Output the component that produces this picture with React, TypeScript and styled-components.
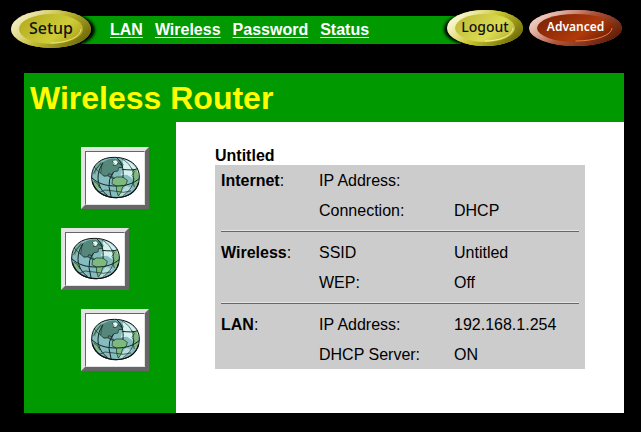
import React from "react";
import styled, { createGlobalStyle } from "styled-components";

const GlobalStyle = createGlobalStyle`
  * { box-sizing: border-box; }
  body {
    margin: 0;
    background: #000;
    color: #000;
    font: 16px/20px "Liberation Sans", Arial, sans-serif;
  }
`;

const TopBar = styled.header`
  display: flex;
  align-items: flex-start;
  padding: 10px 19px 0 11px;
  height: 73px;
`;

const Nav = styled.nav`
  flex: 1;
  display: flex;
  align-items: center;
  gap: 12px;
  height: 28px;
  margin: 6px -14px 0 -10px;
  padding-left: 29px;
  background: #009900;
`;

const NavLink = styled.a`
  color: #fff;
  font-weight: bold;
  text-decoration: underline;
  text-decoration-thickness: 1px;
  text-underline-offset: 2px;
`;

const OvalButton = styled.button<{ $width: number; $height: number; $gap?: number }>`
  display: grid;
  place-items: center;
  flex: none;
  width: ${(p) => p.$width}px;
  height: ${(p) => p.$height}px;
  margin: 0 ${(p) => p.$gap ?? 0}px 0 0;
  padding: 0;
  border: 0;
  background: none;
  z-index: 1;
  cursor: pointer;
  > * { grid-area: 1 / 1; }
`;

const OvalArt = styled.svg`
  display: block;
  width: 100%;
  height: 100%;
  overflow: visible;
`;

const OvalLabel = styled.span<{ $size: number; $weight: number; $color: string }>`
  font: ${(p) => p.$weight} ${(p) => p.$size}px/20px "Noto Sans", Tahoma, sans-serif;
  color: ${(p) => p.$color};
  padding-bottom: 2px;
`;

const Panel = styled.div`
  display: grid;
  grid-template-columns: 152px 1fr;
  margin: 0 17px 19px 24px;
  background: #fff;
`;

const Banner = styled.div`
  grid-column: 1 / -1;
  padding: 5px 6px 4px;
  background: #009900;
`;

const Title = styled.h1`
  margin: 0;
  font-size: 32px;
  line-height: 40px;
  color: #ffff00;
`;

const Sidebar = styled.aside`
  display: flex;
  flex-direction: column;
  align-items: flex-start;
  gap: 19px;
  padding: 25px 0 42px 37px;
  background: #009900;
`;

const GlobeButton = styled.button<{ $indent: number }>`
  margin: 0 0 0 ${(p) => p.$indent}px;
  padding: 0;
  width: 68px;
  height: 62px;
  border: 4px solid;
  border-color: #e4e4e4 #666 #666 #e4e4e4;
  background: #fff;
  cursor: pointer;
`;

const GlobeFrame = styled.span`
  display: block;
  height: 54px;
  border: 1px solid;
  border-color: #666 #e4e4e4 #e4e4e4 #666;
`;

const GlobeArt = styled.svg`
  display: block;
  width: 100%;
  height: 100%;
`;

const Content = styled.main`
  padding: 24px 39px 44px;
`;

const Caption = styled.h2`
  margin: 0;
  font-size: 16px;
  line-height: 19px;
`;

const InfoTable = styled.table`
  width: 100%;
  table-layout: fixed;
  border-spacing: 0;
  background: #ccc;
  th, td {
    height: 30px;
    padding: 2px 0 0 6px;
    text-align: left;
    font-weight: normal;
  }
`;

const Column = styled.col<{ $width?: number }>`
  width: ${(p) => (p.$width ? `${p.$width}px` : "auto")};
`;

const DividerRow = styled.tr`
  && td { height: 12px; padding: 5px 6px; }
`;

const Divider = styled.hr`
  margin: 0;
  height: 2px;
  border: 0;
  border-top: 1px solid #e4e4e4;
  background: #666;
`;

type OvalColors = { light: string; rim: string; dark: string; faceA: string; faceB: string; glint: string };

const yellow: OvalColors = {
  light: "#f6f1cc", rim: "#c2bb35", dark: "#6d6708", faceA: "#b3aa1f", faceB: "#cfcd38", glint: "#f0ee90",
};
const brightYellow: OvalColors = {
  light: "#fffde6", rim: "#cbc72f", dark: "#6d6908", faceA: "#bcb838", faceB: "#dcdc52", glint: "#ffffaa",
};
const red: OvalColors = {
  light: "#f7d9d0", rim: "#b0563c", dark: "#5e1a04", faceA: "#7a2204", faceB: "#b03a0a", glint: "#ff9363",
};

function Oval({ id, w, h, c, shadow }: { id: string; w: number; h: number; c: OvalColors; shadow: number }) {
  const cx = w / 2;
  const cy = h / 2;
  const rx = cx - 8;
  const ry = cy - 4;
  return (
    <OvalArt viewBox={`0 0 ${w} ${h}`} aria-hidden="true">
      <defs>
        <linearGradient id={`${id}-rim`} x1="0" y1="0.2" x2="1" y2="0.7">
          <stop offset="0" stopColor={c.light} />
          <stop offset="0.14" stopColor={c.light} stopOpacity="0.8" />
          <stop offset="0.5" stopColor={c.rim} />
          <stop offset="1" stopColor={c.dark} />
        </linearGradient>
        <linearGradient id={`${id}-face`} x1="0" y1="0.1" x2="1" y2="0.6">
          <stop offset="0" stopColor={c.faceA} />
          <stop offset="0.7" stopColor={c.faceB} />
          <stop offset="1" stopColor={c.faceA} />
        </linearGradient>
        <filter id={`${id}-blur`} x="-20%" y="-20%" width="140%" height="140%">
          <feGaussianBlur stdDeviation="1.6" />
        </filter>
      </defs>
      <ellipse cx={cx + shadow} cy={cy + 1} rx={cx} ry={cy} fill="#000" filter={`url(#${id}-blur)`} />
      <ellipse cx={cx} cy={cy} rx={cx} ry={cy} fill={c.rim} />
      <ellipse cx={cx} cy={cy} rx={cx} ry={cy} fill={`url(#${id}-rim)`} />
      <ellipse cx={cx} cy={cy} rx={rx} ry={ry} fill={`url(#${id}-face)`} />
      <path
        d={`M${cx + rx - 2} ${cy} A${rx - 2} ${ry - 1} 0 0 1 ${cx} ${cy + ry - 1}`}
        fill="none" stroke={c.glint} strokeWidth="0.8"
      />
    </OvalArt>
  );
}

function Globe() {
  return (
    <GlobeArt viewBox="108 51 174 156" aria-hidden="true">
      <path d="M125 126C125 88 154 66 194 67C239 68 268 91 268 126C268 164 240 188 199 188C153 188 125 161 125 126Z" fill="#85bcbf" />
      <path d="M219 73C244 78 263 98 267 121L251 132L231 119L213 121L218 99Z" fill="#d3f1ef" />
      <path d="M213 170L228 152L246 160L219 184L208 184Z" fill="#b4dcdc" />
      <path d="M158 82C168 74 184 70 197 71L211 76L221 88L217 100L205 99L203 108L190 112L184 122L162 125L153 115L151 99Z" fill="#55877b" />
      <path d="M175 123L187 120L194 130L188 133L179 129Z" fill="#55877b" />
      <path d="M189 131L199 126L218 126L232 136L228 150L218 155L213 172L205 183L200 168L199 153L187 147Z" fill="#7cba7d" />
      <path d="M248 101L260 105L266 121L263 143L251 157L245 146L251 132Z" fill="#7cba7d" />
      <path d="M131 112L139 95L151 81L156 82L142 104L135 121Z" fill="#64a180" />
      <path d="M132 139L142 145L149 158L142 164L134 153Z" fill="#7cba7d" />
      <path d="M188 79L198 76L204 83L199 91L190 90Z" fill="#e9faf7" />
      <g fill="none" stroke="#152522" strokeWidth="2" strokeLinejoin="round" strokeLinecap="round">
        <path d="M158 84C149 97 144 112 144 130C145 153 157 171 172 181" strokeWidth="3" />
        <path d="M202 70C217 83 221 100 219 127" strokeWidth="3" />
        <path d="M216 72C237 82 252 104 251 132C249 157 234 172 219 182" />
        <path d="M133 96C139 105 144 108 152 114" />
        <path d="M217 103C233 105 250 106 261 102" strokeWidth="3" />
        <path d="M126 129C144 145 164 153 199 153C229 153 252 145 267 131" strokeWidth="3" />
        <path d="M148 172L165 165L200 169L220 172L242 168" />
        <path d="M190 112L179 133L177 155L183 184" strokeWidth="3" />
        <path d="M158 84L154 97L152 115L162 123L174 122L176 116L186 119L192 110L204 108L206 98L217 97" />
        <path d="M189 131L199 126L218 126L232 136L228 150L218 155L213 172L205 183L200 168L199 153L187 147Z" />
        <path d="M248 102L253 110L246 121L252 132L249 142L253 155" />
        <path d="M132 139L142 145L149 158M131 115L140 100L154 84" />
        <path d="M175 123L184 127L193 130M187 79L192 86L190 91L199 91L204 83L216 91" />
      </g>
      <path d="M125 126C125 88 154 66 194 67C239 68 268 91 268 126C268 164 240 188 199 188C153 188 125 161 125 126Z" fill="none" stroke="#111" strokeWidth="3" />
      <path d="M127 140C135 169 162 188 199 188C236 187 258 169 266 143" fill="none" stroke="#111" strokeWidth="4" />
    </GlobeArt>
  );
}

const navItems = ["LAN", "Wireless", "Password", "Status"];
const shortcuts = [
  { label: "Internet", indent: 20 },
  { label: "Wireless", indent: 0 },
  { label: "LAN", indent: 20 },
];
const groups = [
  { name: "Internet", rows: [["IP Address:", ""], ["Connection:", "DHCP"]] },
  { name: "Wireless", rows: [["SSID", "Untitled"], ["WEP:", "Off"]] },
  { name: "LAN", rows: [["IP Address:", "192.168.1.254"], ["DHCP Server:", "ON"]] },
];

export default function App() {
  return (
    <>
      <GlobalStyle />
      <TopBar>
        <OvalButton type="button" $width={80} $height={38}>
          <Oval id="setup" w={80} h={38} c={yellow} shadow={4} />
          <OvalLabel $size={16} $weight={500} $color="#111">Setup</OvalLabel>
        </OvalButton>
        <Nav>
          {navItems.map((item) => (
            <NavLink key={item} href={`#${item.toLowerCase()}`}>{item}</NavLink>
          ))}
        </Nav>
        <OvalButton type="button" $width={76} $height={36} $gap={6}>
          <Oval id="logout" w={76} h={36} c={brightYellow} shadow={-3} />
          <OvalLabel $size={14} $weight={500} $color="#111">Logout</OvalLabel>
        </OvalButton>
        <OvalButton type="button" $width={93} $height={36}>
          <Oval id="advanced" w={93} h={36} c={red} shadow={0} />
          <OvalLabel $size={12} $weight={600} $color="#fff">Advanced</OvalLabel>
        </OvalButton>
      </TopBar>
      <Panel>
        <Banner><Title>Wireless Router</Title></Banner>
        <Sidebar>
          {shortcuts.map((s) => (
            <GlobeButton key={s.label} type="button" aria-label={s.label} $indent={s.indent}>
              <GlobeFrame><Globe /></GlobeFrame>
            </GlobeButton>
          ))}
        </Sidebar>
        <Content>
          <Caption id="network-name">Untitled</Caption>
          <InfoTable aria-labelledby="network-name">
            <colgroup>
              <Column $width={98} />
              <Column $width={135} />
              <Column />
            </colgroup>
            <tbody>
              {groups.map((group, g) => (
                <React.Fragment key={group.name}>
                  {g > 0 && (
                    <DividerRow><td colSpan={3}><Divider /></td></DividerRow>
                  )}
                  {group.rows.map(([label, value], i) => (
                    <tr key={label}>
                      {i === 0 ? <th scope="row"><b>{group.name}</b>:</th> : <td />}
                      <td>{label}</td>
                      <td>{value}</td>
                    </tr>
                  ))}
                </React.Fragment>
              ))}
            </tbody>
          </InfoTable>
        </Content>
      </Panel>
    </>
  );
}
